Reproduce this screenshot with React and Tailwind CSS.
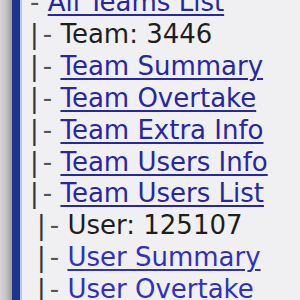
import React from "react";

const rows = [
  { pipe: false, text: "All Teams List", link: true, indent: 0 },
  { pipe: true, text: "Team: 3446", link: false, indent: 0 },
  { pipe: true, text: "Team Summary", link: true, indent: 0 },
  { pipe: true, text: "Team Overtake", link: true, indent: 0 },
  { pipe: true, text: "Team Extra Info", link: true, indent: 0 },
  { pipe: true, text: "Team Users Info", link: true, indent: 0 },
  { pipe: true, text: "Team Users List", link: true, indent: 0 },
  { pipe: true, text: "User: 125107", link: false, indent: 1 },
  { pipe: true, text: "User Summary", link: true, indent: 1 },
  { pipe: true, text: "User Overtake", link: true, indent: 1 },
];

export default function App() {
  return (
    <div className="w-[300px] h-[300px] overflow-hidden flex bg-[#f0f0f3]">
      {/* frame on the left */}
      <div className="w-[12px] h-full bg-gradient-to-r from-[#d6d6d6] via-[#c4c4c4] to-[#9c9c9c]" />
      <div className="w-[8px] h-full bg-[#1c3589]" />
      <div className="w-[2px] h-full bg-[#b8c4e8]" />
      <div
        className="flex-1 pl-[8px] -mt-[13px] text-[26px] leading-[31.9px] text-[#1e1e1e] whitespace-pre"
        style={{ fontFamily: '"DejaVu Sans", Verdana, sans-serif' }}
      >
        {rows.map((r, i) => (
          <div key={i} className={r.indent ? "pl-[7px]" : ""}>
            {r.pipe && <span className="text-[#333] pr-[4px]">|</span>}
            <span className="text-[#555]">- </span>
            {r.link ? (
              <a
                href="#"
                className={
                  r.indent
                    ? "text-[#3030c0] underline decoration-2 underline-offset-[3px]"
                    : "text-[#2626a6] underline decoration-2 underline-offset-[3px]"
                }
              >
                {r.text}
              </a>
            ) : (
              <span>{r.text}</span>
            )}
          </div>
        ))}
      </div>
    </div>
  );
}
